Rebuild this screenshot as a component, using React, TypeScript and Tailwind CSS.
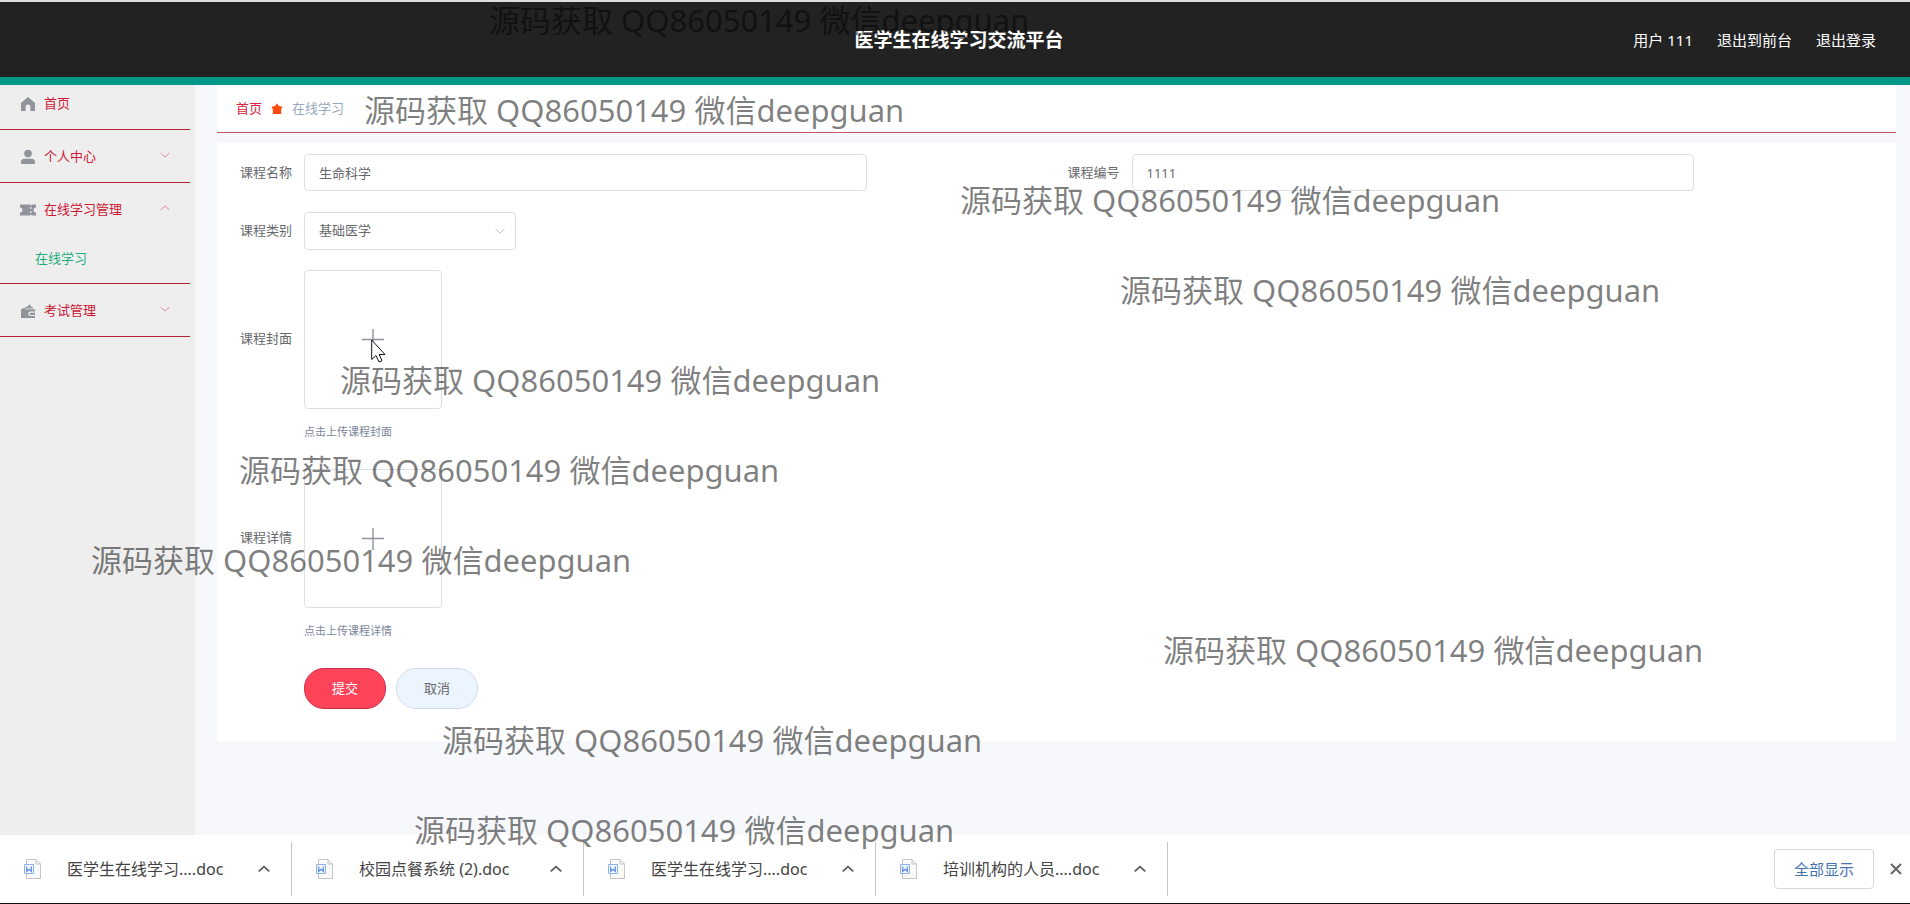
import { useState } from 'react'

const watermark = '源码获取 QQ86050149 微信deepguan'
const marks = [
  'left-[489px] top-0',
  'left-[364px] top-[90px]',
  'left-[960px] top-[180px]',
  'left-[1120px] top-[270px]',
  'left-[340px] top-[360px]',
  'left-[239px] top-[450px]',
  'left-[91px] top-[540px]',
  'left-[1163px] top-[630px]',
  'left-[442px] top-[720px]',
  'left-[414px] top-[810px]',
]

const files = [
  { name: '医学生在线学习....doc' },
  { name: '校园点餐系统 (2).doc' },
  { name: '医学生在线学习....doc' },
  { name: '培训机构的人员....doc' },
]

function Chevron({ className, up = false }: { className: string; up?: boolean }) {
  return (
    <svg viewBox="0 0 12 12" className={className} fill="none" stroke="currentColor" aria-hidden="true">
      <path d={up ? 'M1.5 8 6 4l4.5 4' : 'M1.5 4 6 8l4.5-4'} />
    </svg>
  )
}

const icons = {
  home: 'M8 1 1 7v8h4.6v-4.2a2.4 2.4 0 0 1 4.8 0V15H15V7z',
  user: 'M8 .8a3.8 3.8 0 1 1 0 7.6A3.8 3.8 0 0 1 8 .8zM1 15v-1.8c0-2 1.3-3.4 3.2-3.4h7.6c1.9 0 3.2 1.4 3.2 3.4V15z',
  ticket: 'M0 2.5h10.2l.7 1.2.9-1.2H16v3a2.5 2.5 0 0 0 0 5v3h-4.2l-.9-1.2-.7 1.2H0v-3a2.5 2.5 0 0 0 0-5zM10.3 5v2h1.2V5zm0 4v2h1.2V9z',
  wallet: 'M1 6.2 6.5 4 10 1.2l1.5 3H13v1.3H5v.7h10v2.3h-4.5a2.3 2.3 0 0 0 0 4.6H15V15H1zM10.7 9.8H15V12h-4.3a1.1 1.1 0 0 1 0-2.2z',
}

function MenuItem({ icon, label, arrow }: { icon: keyof typeof icons; label: string; arrow?: 'up' | 'down' }) {
  return (
    <a href="#" className="flex h-[52px] items-center pl-5 pr-[19px] pt-[2px] text-[#cc1835]">
      <svg viewBox="0 0 16 16" className="mr-2 size-4 fill-[#909399]" aria-hidden="true">
        <path fillRule="evenodd" d={icons[icon]} />
      </svg>
      <span className="flex-1">{label}</span>
      {arrow && <Chevron up={arrow === 'up'} className="mb-1 size-3 text-[#e08a99]" />}
    </a>
  )
}

function Upload({ id, label, tip }: { id: string; label: string; tip: string }) {
  return (
    <div className="flex items-start">
      <label htmlFor={id} className="w-[75px] pr-3 text-right leading-[136px]">
        {label}
      </label>
      <div>
        <button
          id={id}
          type="button"
          aria-label={label}
          className="grid h-[139px] w-[138px] place-items-center rounded border border-[#dcdfe6] bg-white"
        >
          <svg viewBox="0 0 22 22" className="size-[22px] stroke-[#8c939d]" strokeWidth="1.4" aria-hidden="true">
            <path d="M11 0v22M0 10.500h22" />
          </svg>
        </button>
        <p className="mb-px mt-[11px] h-6 text-[11px] leading-6 text-[#7b879c]">{tip}</p>
      </div>
    </div>
  )
}

export default function App() {
  const [name, setName] = useState('生命科学')
  const [code, setCode] = useState('1111')
  return (
    <div className="relative flex min-h-screen flex-col overflow-hidden bg-[#f6f8fb] font-['Noto_Sans','Noto_Sans_CJK_SC',sans-serif] text-[13px] text-[#66686c]">
      <header className="relative grid h-[85px] shrink-0 grid-cols-[1fr_auto_1fr] items-center border-b-8 border-t-2 border-b-[#009688] border-t-[#dcdddf] bg-[#222] pr-[34px] pt-px text-white">
        <span />
        <h1 className="pl-[42px] text-[19px] font-bold">医学生在线学习交流平台</h1>
        <nav className="flex justify-end gap-6 text-[15px]">
          <span>用户 111</span>
          <a href="#">退出到前台</a>
          <a href="#">退出登录</a>
        </nav>
      </header>

      <div className="flex flex-1">
        <aside className="w-[195px] shrink-0 bg-[#eee] pr-[5px]">
          <nav>
            <div className="-mt-2 border-b border-[#b5203c]">
              <MenuItem icon="home" label="首页" />
            </div>
            <div className="border-b border-[#b5203c]">
              <MenuItem icon="user" label="个人中心" arrow="down" />
            </div>
            <div className="border-b border-[#b5203c]">
              <MenuItem icon="ticket" label="在线学习管理" arrow="up" />
              <a href="#" className="flex h-12 items-center pl-[35px] text-[#1fae7b]">
                在线学习
              </a>
            </div>
            <div className="border-b border-[#b5203c]">
              <MenuItem icon="wallet" label="考试管理" arrow="down" />
            </div>
          </nav>
        </aside>

        <main className="min-w-0 flex-1 pl-[22px] pr-[14px]">
          <nav className="flex h-12 items-center gap-[9px] border-b border-[#bf5a66] bg-white px-[19px]">
            <a href="#" className="text-[#d9213f]">
              首页
            </a>
            <svg viewBox="0 0 12 12" className="size-3 fill-[#ff4a10]" aria-hidden="true">
              <path d="M6 .3 7.8 3l3.7.8-1.3 2.4V11H1.8V6.2L.5 3.8 4.2 3z" />
            </svg>
            <span className="text-[#97a8be]">在线学习</span>
          </nav>

          <form className="mt-[10px] bg-white px-3 pb-8 pt-[11px]" onSubmit={(e) => e.preventDefault()}>
            <div className="grid grid-cols-2">
              <div className="flex items-center">
                <label htmlFor="name" className="w-[75px] pr-3 text-right">
                  课程名称
                </label>
                <input
                  id="name"
                  value={name}
                  onChange={(e) => setName(e.target.value)}
                  className="h-[37px] w-[68%] rounded border border-[#dcdfe6] bg-white px-[14px]"
                />
              </div>
              <div className="flex items-center">
                <label htmlFor="code" className="w-[75px] pr-3 text-right">
                  课程编号
                </label>
                <input
                  id="code"
                  value={code}
                  onChange={(e) => setCode(e.target.value)}
                  className="h-[37px] w-[68%] rounded border border-[#dcdfe6] bg-white px-[14px]"
                />
              </div>
            </div>

            <div className="mt-[21px] flex items-center">
              <label htmlFor="kind" className="w-[75px] pr-3 text-right">
                课程类别
              </label>
              <div className="grid w-[212px] items-center">
                <select
                  id="kind"
                  className="col-start-1 row-start-1 h-[38px] appearance-none rounded border border-[#dcdfe6] bg-white px-[14px]"
                >
                  <option>基础医学</option>
                </select>
                <Chevron className="pointer-events-none col-start-1 row-start-1 mr-[10px] size-3 justify-self-end text-[#c0c4cc]" />
              </div>
            </div>

            <div className="mt-5 flex flex-col gap-6">
              <Upload id="cover" label="课程封面" tip="点击上传课程封面" />
              <Upload id="detail" label="课程详情" tip="点击上传课程详情" />
            </div>

            <div className="mt-6 flex gap-[10px] pl-[75px]">
              <button type="submit" className="h-[41px] w-[82px] rounded-[20px] border border-[#c8304c] bg-[#ff4359] text-white">
                提交
              </button>
              <button type="button" className="h-[41px] w-[82px] rounded-[20px] border border-[#d3dbe8] bg-[#ecf5ff]">
                取消
              </button>
            </div>
          </form>
        </main>
      </div>

      <footer className="flex h-[69px] shrink-0 items-center border-b border-[#111] bg-white text-base text-[#444]">
        {files.map((file, i) => (
          <div key={i} className="flex h-[54px] w-[292px] items-center border-r border-[#c4c4c4] pl-6 pr-5">
            <svg viewBox="0 0 18 20" className="h-5 w-[18px]" fill="none" aria-hidden="true">
              <path d="M2.5.5h9.5l4.5 4.5v14.5h-14z" fill="#fafafa" stroke="#c3c5ca" />
              <path d="M12 .5V5h4.5" stroke="#c3c5ca" />
              <path d="M.5 5.5h9v9h-9z" fill="#f2f6fe" stroke="#8fb1ea" />
              <path d="M2.7 7.5v4.8L5 10.200l2.300 2.100V7.500" stroke="#5c8ae0" strokeWidth="1.2" />
            </svg>
            <span className="ml-[25px] flex-1 whitespace-nowrap">{file.name}</span>
            <button type="button" aria-label="更多">
              <Chevron up className="size-[14px] stroke-[1.4] text-[#555]" />
            </button>
          </div>
        ))}
        <button type="button" className="ml-auto h-10 w-[100px] rounded border border-[#d4d6da] text-[15px] text-[#4573b0]">
          全部显示
        </button>
        <button type="button" aria-label="关闭" className="ml-4 mr-2">
          <svg viewBox="0 0 12 12" className="size-3 stroke-[#666]" strokeWidth="2" aria-hidden="true">
            <path d="m1 1 10 10M11 1 1 11" />
          </svg>
        </button>
      </footer>

      <div className="pointer-events-none absolute inset-0 overflow-hidden text-[31px] leading-[41px] text-black/50" aria-hidden="true">
        {marks.map((place) => (
          <span key={place} className={`absolute whitespace-nowrap ${place}`}>
            {watermark}
          </span>
        ))}
        <svg viewBox="0 0 15 24" className="absolute left-[371px] top-[339px] h-6 w-[15px]">
          <path d="M.7 1v19.5l4.300-4 3 6.500 3-1.300-2.800-6.200h5.800z" fill="#fff" stroke="#111" />
        </svg>
      </div>
    </div>
  )
}
